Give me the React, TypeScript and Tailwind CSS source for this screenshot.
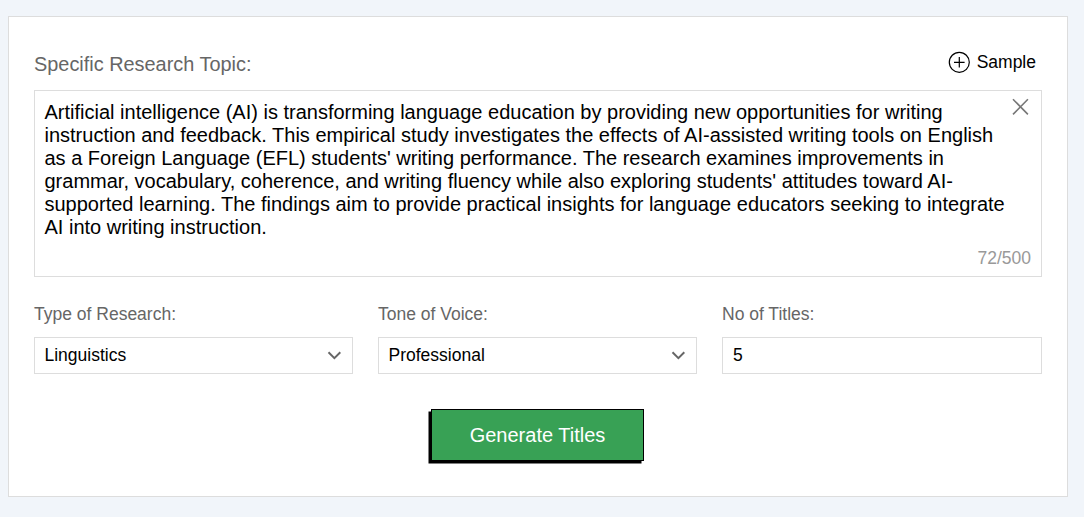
import { useState } from 'react';

const SAMPLE_TEXT =
  "Artificial intelligence (AI) is transforming language education by providing new opportunities for writing instruction and feedback. This empirical study investigates the effects of AI-assisted writing tools on English as a Foreign Language (EFL) students' writing performance. The research examines improvements in grammar, vocabulary, coherence, and writing fluency while also exploring students' attitudes toward AI-supported learning. The findings aim to provide practical insights for language educators seeking to integrate AI into writing instruction.";

function IconPlusCircle() {
  return (
    <svg width="22" height="22" viewBox="0 0 22 22" fill="none" stroke="#000" strokeWidth="1.2">
      <circle cx="11.3" cy="11.3" r="10" />
      <path d="M11.3 6v10.6M6 11.3h10.6" />
    </svg>
  );
}

function IconClose() {
  return (
    <svg width="17" height="17" viewBox="0 0 17 17" fill="none" stroke="#777" strokeWidth="1.6">
      <path d="M1 1.2L15.9 16.4M15.9 1.2L1 16.4" />
    </svg>
  );
}

function IconChevron() {
  return (
    <svg width="14" height="9" viewBox="0 0 14 9" fill="none" stroke="#666" strokeWidth="2">
      <path d="M1.5 1.3L7.4 7.1l5.9-5.8" />
    </svg>
  );
}

function SelectField({ label, value }: { label: string; value: string }) {
  return (
    <div className="w-[319px]">
      <div className="text-[17.5px] leading-5 text-[#666]">{label}</div>
      <button className="mt-[13px] flex h-[37px] w-full items-center justify-between border border-[#ddd] pl-[9.5px] pr-[11px] text-[17.5px] leading-5 text-black">
        <span className="pb-[2px]">{value}</span>
        <IconChevron />
      </button>
    </div>
  );
}

export default function App() {
  const [topic, setTopic] = useState(SAMPLE_TEXT);
  const [count, setCount] = useState('5');

  return (
    <div className="h-[517px] bg-[#f1f5fa] pl-2 pt-4 font-['Liberation_Sans',Arial,sans-serif]">
      <div className="h-[481px] w-[1060px] border border-[#ddd] bg-white px-[25px] pt-[34px]">
        <div className="flex h-[39px] items-start justify-between pr-[6px]">
          <div className="mt-[1px] text-[19.9px] leading-6 text-[#666]">Specific Research Topic:</div>
          <button className="flex items-center gap-[7px] text-[17.5px] leading-[22px] text-black" onClick={() => setTopic(SAMPLE_TEXT)}>
            <IconPlusCircle />
            <span>Sample</span>
          </button>
        </div>

        <div className="relative h-[187px] w-[1008px] border border-[#ddd]">
          <textarea
            className="block h-[150px] w-full resize-none overflow-hidden pl-[9.5px] pr-[30px] pt-[10px] text-[20px] leading-[23px] text-black outline-none"
            spellCheck={false}
            value={topic}
            onChange={e => setTopic(e.target.value)}
          />
          <button className="absolute right-[12px] top-[7px]" onClick={() => setTopic('')}>
            <IconClose />
          </button>
          <div className="mt-[7px] pr-[10px] text-right text-[17.5px] leading-5 text-[#999]">72/500</div>
        </div>

        <div className="mt-[27px] flex gap-[25px]">
          <SelectField label="Type of Research:" value="Linguistics" />
          <SelectField label="Tone of Voice:" value="Professional" />
          <div className="w-[320px]">
            <div className="text-[17.5px] leading-5 text-[#666]">No of Titles:</div>
            <input
              className="mt-[13px] block h-[37px] w-full border border-[#ddd] px-[10px] text-[17.5px] text-black outline-none"
              value={count}
              onChange={e => setCount(e.target.value)}
            />
          </div>
        </div>

        <div className="mt-[35px] flex justify-center pr-[2px]">
          <button className="h-[52px] w-[213px] border border-black bg-[#38a155] pl-[1px] text-[20px] text-white shadow-[-2.5px_2.5px_0_#000]">
            Generate Titles
          </button>
        </div>
      </div>
    </div>
  );
}
